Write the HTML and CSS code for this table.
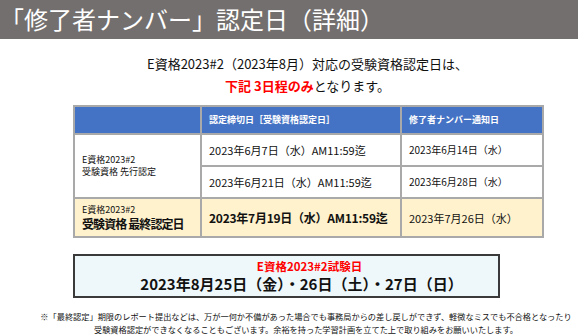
FILE: index.html
```html
<!DOCTYPE html>
<html lang="ja">
<head>
<meta charset="utf-8">
<link rel="stylesheet" href="styles.css">
</head>
<body>
<div class="title">「修了者ナンバー」認定日（詳細）</div>
<div class="content">
  <p class="intro">E資格2023#2（2023年8月）対応の受験資格認定日は、<br><span class="red">下記 3日程のみ</span>となります。</p>
  <table class="sched">
    <colgroup><col class="c1"><col class="c2"><col class="c3"></colgroup>
    <tr class="head"><th></th><th>認定締切日［受験資格認定日］</th><th>修了者ナンバー通知日</th></tr>
    <tr><td rowspan="2" class="label">E資格2023#2<br>受験資格 先行認定</td><td class="d">2023年6月7日（水）AM11:59迄</td><td class="n">2023年6月14日（水）</td></tr>
    <tr><td class="d">2023年6月21日（水）AM11:59迄</td><td class="n">2023年6月28日（水）</td></tr>
    <tr class="final"><td class="label"><span class="sm">E資格2023#2</span><br><b class="big">受験資格 最終認定日</b></td><td class="d bold">2023年7月19日（水）AM11:59迄</td><td class="n lg">2023年7月26日（水）</td></tr>
  </table>
  <div class="exam">
    <div class="exam-title">E資格2023#2試験日</div>
    <div class="exam-date">2023年8月25日（金）・26日（土）・27日（日）</div>
  </div>
</div>
<p class="note">※「最終認定」期限のレポート提出などは、万が一何か不備があった場合でも事務局からの差し戻しができず、軽微なミスでも不合格となったり<br>受験資格認定ができなくなることもございます。余裕を持った学習計画を立てた上で取り組みをお願いいたします。</p>
</body>
</html>
```
FILE: styles.css
```css
html, body { margin: 0; padding: 0; background: #fff; }
body { font-family: "Noto Sans CJK JP", "Noto Sans", sans-serif; color: #111; }
.title {
  background: #736f6e; color: #fff; font-size: 24px; height: 39px; line-height: 38px;
  padding-left: 0; white-space: nowrap;
}
.content { margin-left: 73px; width: 469px; }
.intro { margin: 14px 0 0; text-align: center; font-size: 13px; line-height: 22px; }
.red { color: #f00; font-weight: bold; }
.sched { margin-top: 8px; border-collapse: collapse; width: 469px; table-layout: fixed; }
.c1 { width: 127px; } .c2 { width: 200px; } .c3 { width: 142px; }
.sched th, .sched td { border: 2px solid #a9a9a9; padding: 0 0 0 7px; text-align: left; white-space: nowrap; line-height: 14px; }
.head th { background: #4472c4; color: #fff; font-size: 9px; height: 26px; font-weight: bold; }
.sched td { height: 30px; }
.label { font-size: 9px; }
.sched .label { line-height: 12px; }
.d { font-size: 11px; }
.n { font-size: 10px; }
.final td { background: #fff2cc; height: 37px; }
.sm { font-size: 9px; }
.big { font-size: 12px; letter-spacing: -0.9px; line-height: 15px; }
.sched .bold { font-weight: bold; font-size: 12px; letter-spacing: -0.25px; }
.sched .lg { font-size: 11px; }
.exam {
  margin-top: 16px; width: 427px; border: 2px solid #3a3a3a; background: #eef7f9;
  text-align: center; padding: 3px 0 3px 30px; box-sizing: border-box;
}
.exam-title { color: #f00; font-weight: bold; font-size: 11.5px; line-height: 15px; margin-left: 16px; }
.exam-date { font-weight: bold; font-size: 15px; line-height: 19px; }
.note { margin: 12px 0 0 34px; text-align: center; font-size: 8.2px; line-height: 12.5px; white-space: nowrap; }
```
